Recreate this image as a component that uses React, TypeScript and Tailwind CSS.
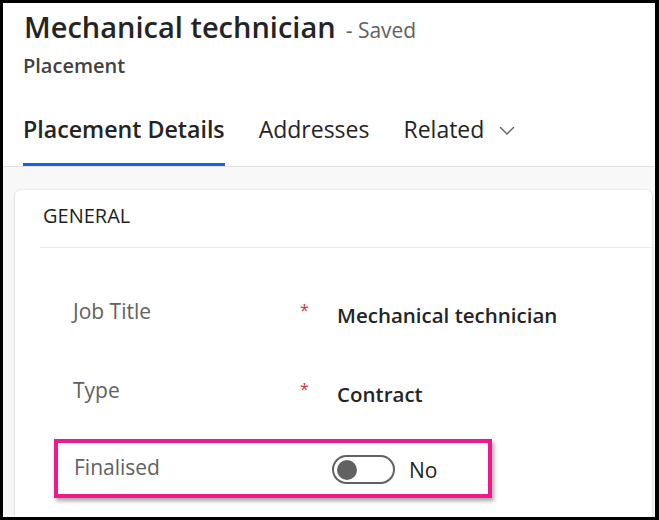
import React from "react";

function Chevron() {
  return (
    <svg width="16" height="10" viewBox="0 0 16 10" fill="none" className="mt-[4px]">
      <path d="M1.5 1.5 L8 8 L14.5 1.5" stroke="#616161" strokeWidth="1.4" strokeLinecap="round" strokeLinejoin="round" />
    </svg>
  );
}

function Field({ label, value }: { label: string; value: string }) {
  return (
    <div className="flex items-start h-[79px]">
      <div className="w-[227px] text-[21px] leading-[28px] text-[#616161]">{label}</div>
      <div className="w-[37px] text-[16px] leading-[26px] text-[#d13438]">*</div>
      <div className="mt-[4px] text-[20.5px] leading-[28px] font-semibold text-[#242424]">{value}</div>
    </div>
  );
}

export default function App() {
  return (
    <div
      className="w-[659px] h-[520px] overflow-hidden bg-white border-black border-t-[3px] border-l-[3px] border-b-[3px] border-r-[4px] flex flex-col"
      style={{ fontFamily: "'Open Sans', 'Noto Sans', sans-serif" }}
    >
      {/* header */}
      <div className="pl-[20px] pt-[6px] border-b border-[#e0e0e0]">
        <div className="flex items-baseline h-[36px]">
          <h1 className="ml-[1px] text-[29px] leading-[36px] font-semibold text-[#242424]">Mechanical technician</h1>
          <span className="ml-[10px] text-[21px] leading-[24px] text-[#616161]">- Saved</span>
        </div>
        <div className="mt-[9px] text-[20px] leading-[24px] font-semibold text-[#424242]">Placement</div>
        <div className="mt-[36px] flex items-start gap-[34px]">
          <div className="pb-[19px] border-b-[3px] border-[#1b63dc] text-[23.2px] leading-[30px] font-semibold text-[#242424]">
            Placement Details
          </div>
          <div className="pb-[19px] border-b-[3px] border-transparent text-[23px] leading-[30px] text-[#242424]">
            Addresses
          </div>
          <div className="pb-[19px] border-b-[3px] border-transparent flex items-center gap-[15px] text-[23px] leading-[30px] text-[#242424]">
            Related
            <Chevron />
          </div>
        </div>
      </div>

      {/* body */}
      <div className="flex-1 bg-[#f8f8f8] pt-[23px] pl-[12px] pr-[3px] flex flex-col overflow-hidden">
        <div className="flex-1 bg-white rounded-t-[6px] shadow-[0_0_2px_rgba(0,0,0,0.12),0_1px_3px_rgba(0,0,0,0.12)] pt-[12px]">
          <div className="ml-[25px] border-b border-[#ebebeb] pb-[17px]">
            <div className="pl-[3px] text-[20px] leading-[28px] text-[#1f1f1f]">GENERAL</div>
          </div>
          <div className="pt-[49px] pl-[58px]">
            <Field label="Job Title" value="Mechanical technician" />
            <Field label="Type" value="Contract" />
          </div>
          <div className="-mt-[16px] ml-[39px] w-[438px] h-[59px] border-[4px] border-[#ec1a8c] shadow-[2px_3px_4px_rgba(0,0,0,0.35)] pl-[16px] pt-[10px] flex items-start">
            <div className="w-[258px] text-[21px] leading-[28px] text-[#616161]">Finalised</div>
            <div className="mt-[2px] w-[63px] h-[29px] rounded-full border-[2px] border-[#616161] flex items-center pl-[3px]">
              <div className="w-[20px] h-[20px] rounded-full bg-[#616161]" />
            </div>
            <div className="ml-[14px] mt-[3px] text-[21px] leading-[28px] text-[#242424]">No</div>
          </div>
        </div>
      </div>
    </div>
  );
}
